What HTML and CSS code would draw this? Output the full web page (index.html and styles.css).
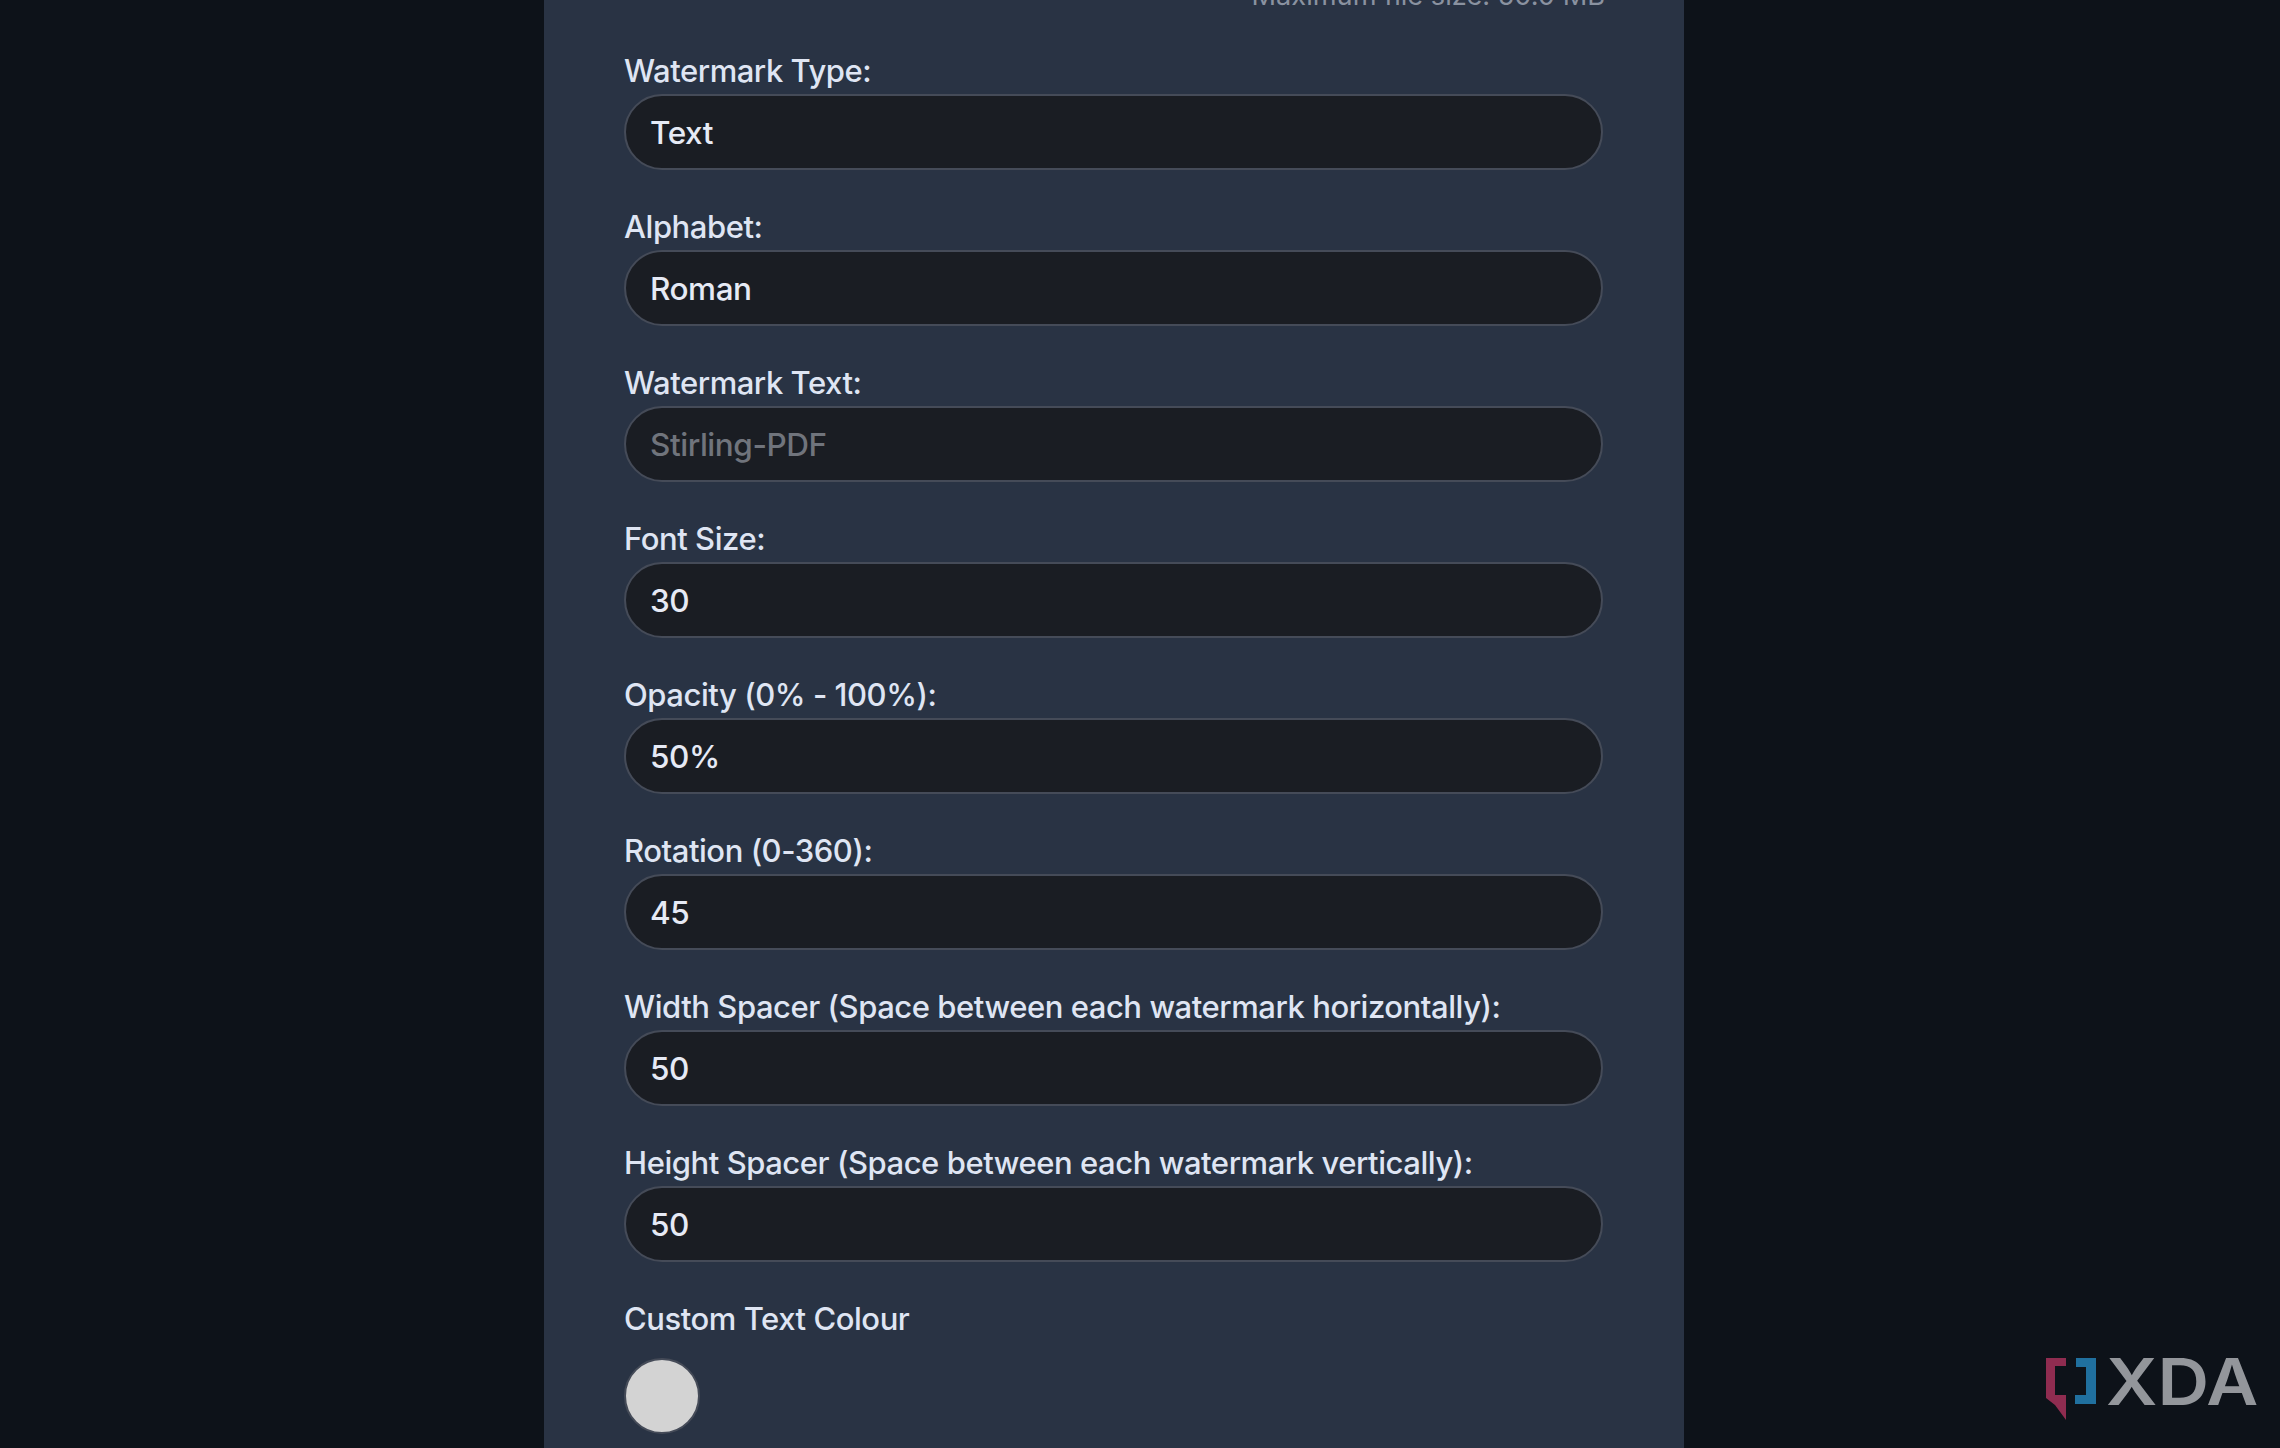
FILE: index.html
```html
<!DOCTYPE html>
<html lang="en">
<head>
    <meta charset="UTF-8">
    <meta name="viewport" content="width=device-width, initial-scale=1.0">
    <title>Add Watermark</title>
    <link rel="stylesheet" href="styles.css">
</head>
<body>
    <main class="panel">
        <p class="file-hint">Maximum file size: 50.0 MB</p>

        <div class="field">
            <label class="field-label">Watermark Type:</label>
            <div class="field-input">Text</div>
        </div>
        <div class="field">
            <label class="field-label">Alphabet:</label>
            <div class="field-input">Roman</div>
        </div>
        <div class="field">
            <label class="field-label">Watermark Text:</label>
            <div class="field-input placeholder">Stirling-PDF</div>
        </div>
        <div class="field">
            <label class="field-label">Font Size:</label>
            <div class="field-input">30</div>
        </div>
        <div class="field">
            <label class="field-label">Opacity (0% - 100%):</label>
            <div class="field-input">50%</div>
        </div>
        <div class="field">
            <label class="field-label">Rotation (0-360):</label>
            <div class="field-input">45</div>
        </div>
        <div class="field">
            <label class="field-label">Width Spacer (Space between each watermark horizontally):</label>
            <div class="field-input">50</div>
        </div>
        <div class="field">
            <label class="field-label">Height Spacer (Space between each watermark vertically):</label>
            <div class="field-input">50</div>
        </div>
        <div class="field">
            <label class="field-label">Custom Text Colour</label>
            <div class="colour-swatch"></div>
        </div>
    </main>

    <!-- site watermark -->
    <div class="xda-mark">
        <svg class="xda-icon" width="50" height="62" viewBox="0 0 50 62">
            <path fill="#8f2c50" d="M0 0H20V8H9V37H20V62L9 47L0 40Z"/>
            <path fill="#20709f" d="M30 0H50V46H29V37H40V9H30Z"/>
        </svg>
        <span class="xda-text">XDA</span>
    </div>
</body>
</html>
```

FILE: styles.css
```css
* {
    box-sizing: border-box;
}

html, body {
    height: 100%;
}

body {
    margin: 0;
    overflow: hidden;
    position: relative;
    background-color: #0d1219;
    font-family: Inter, "Liberation Sans", sans-serif;
}

/* main column */
.panel {
    width: 1140px;
    height: 1448px;
    margin-left: 544px;
    padding: 0 81px 0 80px;
    display: flex;
    flex-direction: column;
    background-color: #293344;
}

.file-hint {
    margin: -19px -2px 37px 0;
    height: 30px;
    line-height: 30px;
    text-align: right;
    font-size: 27.2px;
    color: #8a92a0;
}

.field {
    height: 156px;
    flex-shrink: 0;
}

.field-label {
    display: block;
    height: 46px;
    line-height: 46px;
    font-size: 31px;
    font-weight: 450;
    letter-spacing: -0.45px;
    color: #dfe5f3;
}

.field-input {
    height: 76px;
    padding: 0 24px;
    display: flex;
    align-items: center;
    border: 2px solid #454b58;
    border-radius: 38px;
    background-color: #1a1d23;
    font-size: 31.5px;
    font-weight: 450;
    letter-spacing: -0.45px;
    color: #e6eaf5;
}

.placeholder {
    color: #70747c;
}

.colour-swatch {
    width: 76px;
    height: 76px;
    margin-top: 16px;
    border: 2px solid #454b58;
    border-radius: 50%;
    background-color: #d3d3d3;
}

/* bottom right logo */
.xda-mark {
    position: absolute;
    right: 25px;
    bottom: 28px;
    display: flex;
    align-items: flex-start;
    gap: 10px;
}

.xda-text {
    width: 149px;
    font-size: 65px;
    font-weight: 600;
    line-height: 47px;
    transform: scaleX(1.1);
    transform-origin: left;
    color: #93969b;
}
```
